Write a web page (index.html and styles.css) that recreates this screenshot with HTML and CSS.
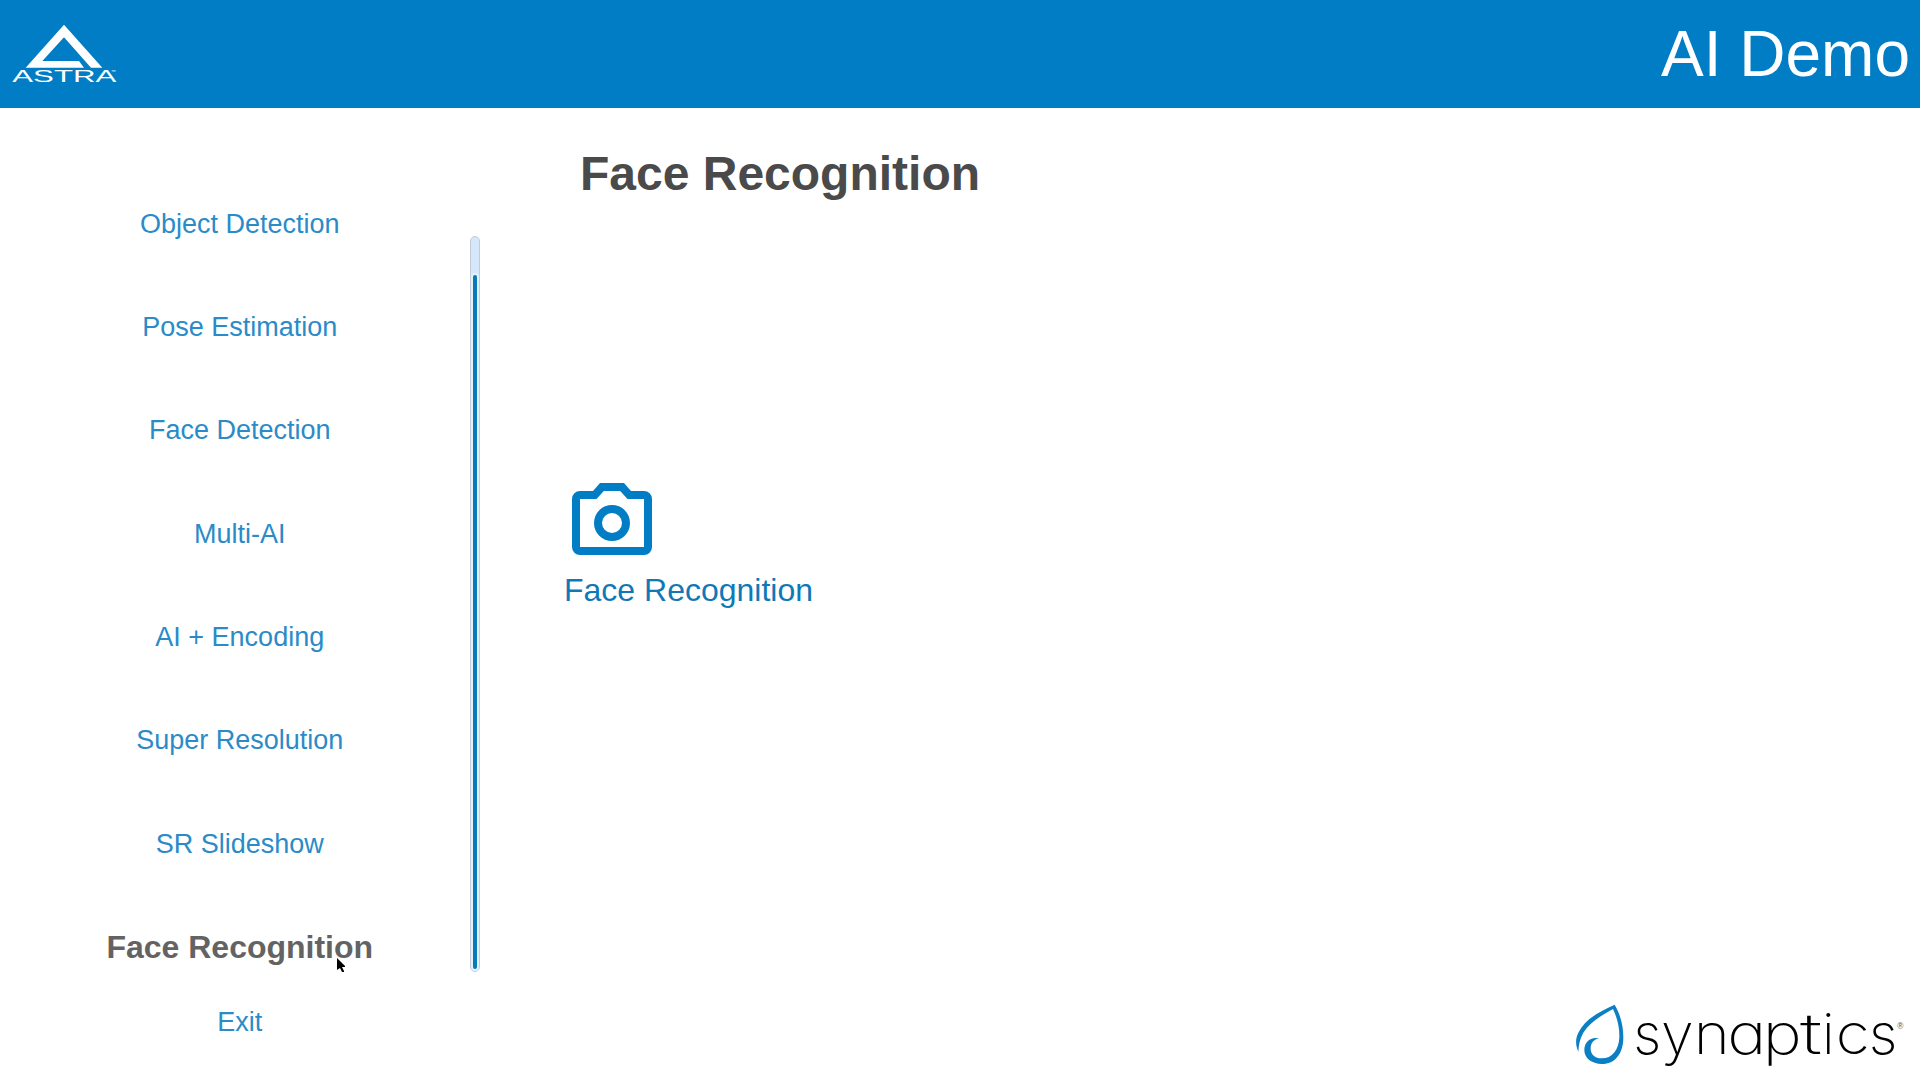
FILE: index.html
```html
<!DOCTYPE html>
<html lang="en">
<head>
<meta charset="utf-8">
<title>AI Demo</title>
<link rel="stylesheet" href="styles.css">
</head>
<body>
<header class="topbar">
  <svg class="astra" viewBox="0 0 390 330" role="img" aria-label="Astra">
    <path d="M77 173 L192 44 L307 173 H273 L192 82 L127 153 H237 L252 173 Z" fill="#fff"/>
    <text class="astra-word" x="37" y="216" textLength="312" lengthAdjust="spacingAndGlyphs">ASTRA</text>
    <text class="astra-tm" x="333" y="189">™</text>
  </svg>
  <h1 class="app-title">AI Demo</h1>
</header>
<main class="layout">
  <nav class="sidebar">
    <a class="item">Object Detection</a>
    <a class="item">Pose Estimation</a>
    <a class="item">Face Detection</a>
    <a class="item">Multi-AI</a>
    <a class="item">AI + Encoding</a>
    <a class="item">Super Resolution</a>
    <a class="item">SR Slideshow</a>
    <a class="item selected">Face Recognition</a>
    <a class="item exit">Exit</a>
  </nav>
  <div class="scrollbar"><div class="thumb"></div></div>
  <section class="content">
    <h2 class="title">Face Recognition</h2>
    <div class="card">
      <svg class="camera" viewBox="0 0 80 72" fill="#007dc5" fill-rule="evenodd">
        <path d="M8 8H21L28 0H52L59 8H72A8 8 0 0 1 80 16V64A8 8 0 0 1 72 72H8A8 8 0 0 1 0 64V16A8 8 0 0 1 8 8ZM8 16V64H72V16H55.500L48.200 8H31.800L24.500 16Z"/>
        <path d="M40 22A18 18 0 1 1 40 58A18 18 0 1 1 40 22ZM40 30A10 10 0 1 0 40 50A10 10 0 1 0 40 30Z"/>
      </svg>
      <span class="label">Face Recognition</span>
    </div>
    <svg class="synaptics" viewBox="0 0 1080 270" role="img" aria-label="Synaptics">
      <path d="M55 185C46 165 46 145 55 128C74 89 117 65 164 44C181 73 190 107 190 143C190 190 165 222 126 222C94 222 73 204 73 181C73 155 92 139 117 145C100 149 92 160 92 176C92 194 106 205 125 205C157 205 176 179 178 143C179 111 171 82 159 57C121 78 88 98 70 128C60 145 56 164 55 185Z" fill="#0a7fc4"/>
      <g class="word">
        <text x="220" y="192" textLength="84" lengthAdjust="spacingAndGlyphs">s</text>
        <text x="303" y="192" textLength="98" lengthAdjust="spacingAndGlyphs">y</text>
        <text x="401" y="192" textLength="108" lengthAdjust="spacingAndGlyphs">n</text>
        <text x="502" y="192" textLength="117" lengthAdjust="spacingAndGlyphs">a</text>
        <text x="608" y="192" textLength="117" lengthAdjust="spacingAndGlyphs">p</text>
        <text x="720" y="192" textLength="66" lengthAdjust="spacingAndGlyphs">t</text>
        <text x="786" y="192">i</text>
        <text x="827" y="192" textLength="102" lengthAdjust="spacingAndGlyphs">c</text>
        <text x="926" y="192" textLength="86" lengthAdjust="spacingAndGlyphs">s</text>
      </g>
      <text class="reg" x="1012" y="117">®</text>
    </svg>
  </section>
</main>
<svg class="cursor" viewBox="0 0 8 15"><path d="M0 0L8 8V9H5L7 13V14H5L3 10L0 12Z"/></svg>
</body>
</html>
```
FILE: styles.css
```css
* { box-sizing: border-box; }
body {
  margin: 0;
  width: 1920px;
  height: 1080px;
  overflow: hidden;
  display: flex;
  flex-direction: column;
  background: #fff;
  font-family: "Liberation Sans", Arial, sans-serif;
}
.topbar {
  flex: none;
  height: 108px;
  display: flex;
  justify-content: space-between;
  align-items: center;
  padding-right: 10px;
  background: #007dc5;
}
.astra { width: 130px; height: 110px; margin-top: 22px; }
.astra-word { font: 49px "Liberation Sans", sans-serif; fill: #fff; }
.astra-tm { font: 14px "Liberation Sans", sans-serif; fill: #fff; }
.app-title { margin: 0; font-size: 64px; font-weight: 400; line-height: 108px; color: #fff; }
.layout { flex: 1; display: flex; align-items: flex-start; }
.sidebar {
  width: 470px;
  padding: 64.7px 0 0 9.5px;
  display: flex;
  flex-direction: column;
}
.item {
  height: 103.33px;
  line-height: 103.33px;
  text-align: center;
  font-size: 27px;
  color: #2a8bc8;
}
.selected { font-size: 32px; font-weight: 700; color: #636363; }
.exit { height: 46px; line-height: 46px; }
.scrollbar {
  width: 10px;
  height: 736px;
  margin-top: 128px;
  padding: 38px 2px 2px;
  border: 1px solid #c3ccda;
  border-radius: 5px;
  background: #d6e7fb;
}
.thumb {
  width: 4px;
  height: 694px;
  border-radius: 2px;
  background: #0c78b8;
  box-shadow: 0 0 0 2px #e0f3fa;
}
.content {
  flex: 1;
  height: 972px;
  display: flex;
  flex-direction: column;
}
.title {
  margin: 38px 0 0 100px;
  font-size: 48px;
  line-height: 55px;
  color: #4a4a4a;
}
.card {
  margin: 282px 0 0 84px;
  display: flex;
  flex-direction: column;
  align-items: flex-start;
}
.camera { width: 80px; height: 72px; margin-left: 8px; }
.label { margin-top: 17px; font-size: 32px; line-height: 36px; color: #0f79b8; }
.synaptics { width: 360px; height: 90px; margin: auto 0 0 auto; }
.word {
  font: 200 168px Inter, sans-serif;
  font-feature-settings: "cv11" 1;
  fill: #000;
}
.reg { font: 25px "Liberation Sans", sans-serif; fill: #555; }
.cursor { position: absolute; left: 337px; top: 958px; width: 8px; height: 15px; }
```
